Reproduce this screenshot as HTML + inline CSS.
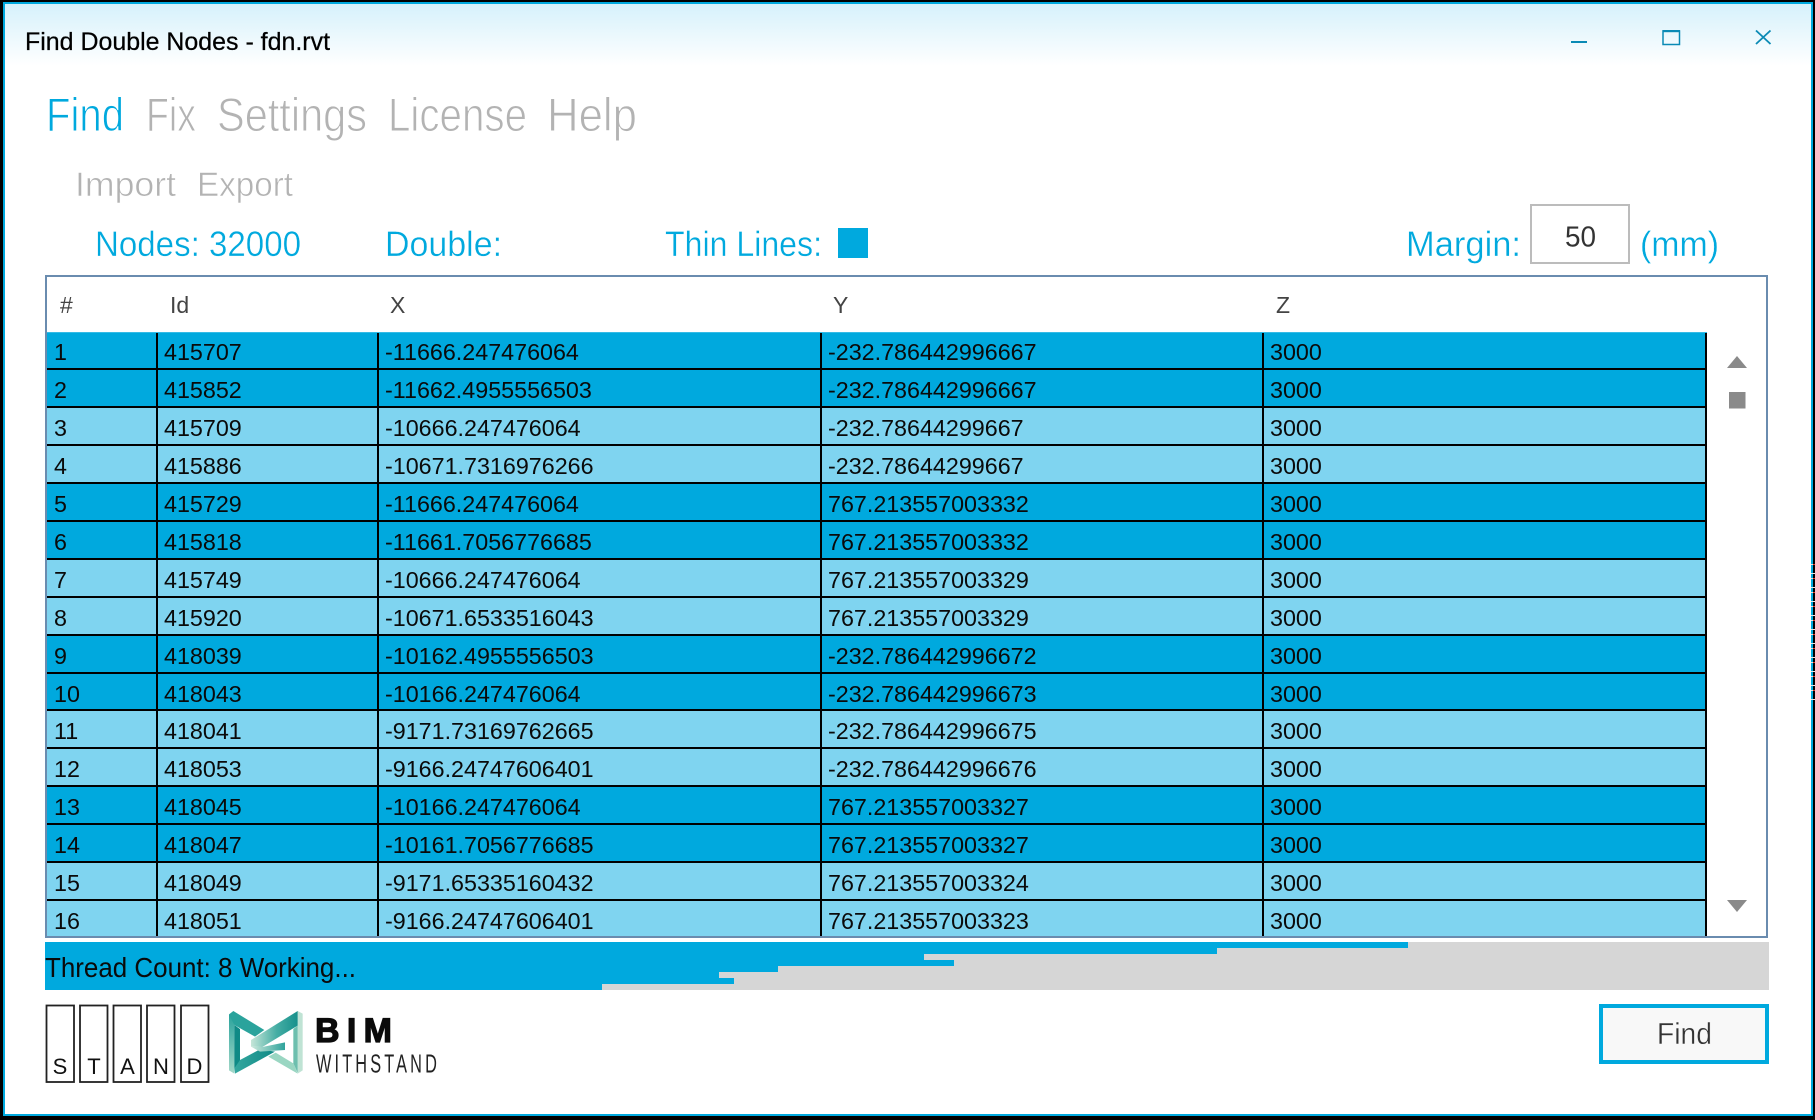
<!DOCTYPE html>
<html lang="en"><head><meta charset="utf-8"><title>Find Double Nodes - fdn.rvt</title>
<style>
html,body{margin:0;padding:0;width:1815px;height:1120px;overflow:hidden;background:#000}
#win{position:absolute;left:3px;top:2px;width:1806px;height:1110px;border:2px solid #00a9de;background:linear-gradient(#d6f1fb 0,#ffffff 62px,#ffffff 100%);}
#grid{position:absolute;left:45px;top:275px;width:1719px;height:659px;border:2px solid #6a8caf;background:#fff;overflow:hidden}
#grid table{position:absolute;left:0;top:55px;width:1660px;table-layout:fixed;border-collapse:separate;border-spacing:0;font:23.3px/26px "Liberation Sans",sans-serif;color:#0a0a0a}
#grid td{height:38px;box-sizing:border-box;padding:6.5px 0 0 6px;vertical-align:top;border-right:2px solid #000;border-bottom:2px solid #000;white-space:nowrap;overflow:hidden}
#grid tr.s td{height:37px}
#grid td:first-child{padding-left:7px}
tr.d td{background:#00a9de}
tr.l td{background:#7fd4f0}
svg{position:absolute;left:0;top:0}
text{font-family:"Liberation Sans",sans-serif}
.t{fill:#b3b3b3;stroke:#fff;stroke-width:.6px}
.b{fill:#00a9de;stroke:#fff;stroke-width:.35px}
.h{fill:#444;font-size:23px}
</style></head><body>
<div id="win"></div>
<div id="grid"><table>
<colgroup><col style="width:111px"><col style="width:221px"><col style="width:443px"><col style="width:442px"><col style="width:443px"></colgroup>
<tr class="d"><td>1</td><td>415707</td><td>-11666.247476064</td><td>-232.786442996667</td><td>3000</td></tr>
<tr class="d"><td>2</td><td>415852</td><td>-11662.4955556503</td><td>-232.786442996667</td><td>3000</td></tr>
<tr class="l"><td>3</td><td>415709</td><td>-10666.247476064</td><td>-232.78644299667</td><td>3000</td></tr>
<tr class="l"><td>4</td><td>415886</td><td>-10671.7316976266</td><td>-232.78644299667</td><td>3000</td></tr>
<tr class="d"><td>5</td><td>415729</td><td>-11666.247476064</td><td>767.213557003332</td><td>3000</td></tr>
<tr class="d"><td>6</td><td>415818</td><td>-11661.7056776685</td><td>767.213557003332</td><td>3000</td></tr>
<tr class="l"><td>7</td><td>415749</td><td>-10666.247476064</td><td>767.213557003329</td><td>3000</td></tr>
<tr class="l"><td>8</td><td>415920</td><td>-10671.6533516043</td><td>767.213557003329</td><td>3000</td></tr>
<tr class="d"><td>9</td><td>418039</td><td>-10162.4955556503</td><td>-232.786442996672</td><td>3000</td></tr>
<tr class="d s"><td>10</td><td>418043</td><td>-10166.247476064</td><td>-232.786442996673</td><td>3000</td></tr>
<tr class="l"><td>11</td><td>418041</td><td>-9171.73169762665</td><td>-232.786442996675</td><td>3000</td></tr>
<tr class="l"><td>12</td><td>418053</td><td>-9166.24747606401</td><td>-232.786442996676</td><td>3000</td></tr>
<tr class="d"><td>13</td><td>418045</td><td>-10166.247476064</td><td>767.213557003327</td><td>3000</td></tr>
<tr class="d"><td>14</td><td>418047</td><td>-10161.7056776685</td><td>767.213557003327</td><td>3000</td></tr>
<tr class="l"><td>15</td><td>418049</td><td>-9171.65335160432</td><td>767.213557003324</td><td>3000</td></tr>
<tr class="l"><td>16</td><td>418051</td><td>-9166.24747606401</td><td>767.213557003323</td><td>3000</td></tr>
</table></div>
<svg width="1815" height="1120" viewBox="0 0 1815 1120" xmlns="http://www.w3.org/2000/svg">
<defs>
<linearGradient id="g2" x1="0" x2="1" y1="0" y2="0"><stop offset="0" stop-color="#c6e6d8"/><stop offset=".55" stop-color="#45ada4"/><stop offset="1" stop-color="#17918c"/></linearGradient>
<linearGradient id="g3" x1="0" x2="0" y1="0" y2="1"><stop offset="0" stop-color="#2aa39c"/><stop offset="1" stop-color="#a5d9c9"/></linearGradient>
<linearGradient id="g4" x1="0" x2="1" y1="0" y2="0"><stop offset="0" stop-color="#35a79f"/><stop offset="1" stop-color="#0f8a86"/></linearGradient>
<linearGradient id="g5" x1="0" x2="1" y1="0" y2="0"><stop offset="0" stop-color="#cde9dc"/><stop offset="1" stop-color="#2fa39b"/></linearGradient>
</defs>
<rect x="47" y="332" width="1660" height="1" fill="#35bbe6"/>
<text x="25" y="50" font-size="25" textLength="305" lengthAdjust="spacingAndGlyphs" fill="#000" stroke="#000" stroke-width=".25">Find Double Nodes - fdn.rvt</text>
<g fill="#0a8ab5">
<rect x="1571" y="41" width="16" height="2"/>
<path d="M1663 31h16.500v13.500h-16.500z" fill="none" stroke="#0a8ab5" stroke-width="1.500"/>
<rect x="1662.500" y="30" width="17.500" height="2.200"/>
</g>
<path d="M1756 30.500L1770.500 44M1770.500 30.500L1756 44" stroke="#0a8ab5" stroke-width="1.800" fill="none"/>
<g font-size="47">
<text x="46" y="131" textLength="78" lengthAdjust="spacingAndGlyphs" fill="#00a9de" stroke="#fff" stroke-width="1">Find</text>
<text class="t" x="146" y="131" textLength="50" lengthAdjust="spacingAndGlyphs" style="stroke-width:1px">Fix</text>
<text class="t" x="217" y="131" textLength="150" lengthAdjust="spacingAndGlyphs" style="stroke-width:1px">Settings</text>
<text class="t" x="388" y="131" textLength="139" lengthAdjust="spacingAndGlyphs" style="stroke-width:1px">License</text>
<text class="t" x="547" y="131" textLength="90" lengthAdjust="spacingAndGlyphs" style="stroke-width:1px">Help</text>
</g>
<g font-size="34">
<text class="t" x="75" y="196" textLength="101" lengthAdjust="spacingAndGlyphs">Import</text>
<text class="t" x="197" y="196" textLength="96" lengthAdjust="spacingAndGlyphs">Export</text>
</g>
<g font-size="35">
<text class="b" x="95" y="256" textLength="206" lengthAdjust="spacingAndGlyphs">Nodes: 32000</text>
<text class="b" x="385" y="256" textLength="117" lengthAdjust="spacingAndGlyphs">Double:</text>
<text class="b" x="665" y="256" textLength="157" lengthAdjust="spacingAndGlyphs">Thin Lines:</text>
<text class="b" x="1406" y="256" textLength="115" lengthAdjust="spacingAndGlyphs">Margin:</text>
<text class="b" x="1640" y="256" textLength="79" lengthAdjust="spacingAndGlyphs">(mm)</text>
</g>
<rect x="838" y="228" width="30" height="30" fill="#00a9de"/>
<rect x="1531" y="205" width="98" height="58" fill="#fff" stroke="#bcbcbc" stroke-width="2"/>
<text x="1565" y="246.500" font-size="29" textLength="31" lengthAdjust="spacingAndGlyphs" fill="#333">50</text>
<text class="h" x="60" y="313">#</text>
<text class="h" x="170" y="313">Id</text>
<text class="h" x="390" y="313">X</text>
<text class="h" x="833" y="313">Y</text>
<text class="h" x="1276" y="313">Z</text>
<g fill="#8a8a8a">
<path d="M1737 356L1747 368H1727Z"/>
<rect x="1729" y="392" width="16.500" height="16.500"/>
<path d="M1727 900H1747L1737 912Z"/>
</g>
<rect x="45" y="942" width="1724" height="48" fill="#d6d6d6"/>
<g fill="#00a9de">
<rect x="45" y="942" width="1363" height="6"/>
<rect x="45" y="948" width="1172" height="6"/>
<rect x="45" y="954" width="879" height="6"/>
<rect x="45" y="960" width="909" height="6"/>
<rect x="45" y="966" width="733" height="6"/>
<rect x="45" y="972" width="674" height="6"/>
<rect x="45" y="978" width="689" height="6"/>
<rect x="45" y="984" width="557" height="6"/>
</g>
<text x="45" y="977" font-size="28" textLength="311" lengthAdjust="spacingAndGlyphs" fill="#0a0a0a">Thread Count: 8 Working...</text>
<g fill="#fff" stroke="#222" stroke-width="1.800">
<rect x="46.500" y="1005.500" width="27.500" height="76.500"/>
<rect x="80" y="1005.500" width="27.500" height="76.500"/>
<rect x="113.500" y="1005.500" width="27.500" height="76.500"/>
<rect x="147" y="1005.500" width="27.500" height="76.500"/>
<rect x="181" y="1005.500" width="27.500" height="76.500"/>
</g>
<g font-size="22" fill="#111" text-anchor="middle">
<text x="60" y="1074">S</text><text x="94" y="1074">T</text><text x="127.500" y="1074">A</text><text x="161" y="1074">N</text><text x="194.500" y="1074">D</text>
</g>
<g transform="translate(225 1005) scale(.3333)">
<path d="M12 28L28 38V206L12 196Z" fill="url(#g3)"/>
<path d="M12 28L25 18L118 75L90 95L28 60Z" fill="#2aa39c"/>
<path d="M28 60L45 72V172L28 190Z" fill="#0f8a86"/>
<path d="M130 155L152 143L205 175L218 206Z" fill="#9ad6c2"/>
<path d="M218 18L233 26V196L218 206Z" fill="#bfe3d4"/>
<path d="M205 72L218 62V204L205 175Z" fill="#6dbfae"/>
<path d="M28 190L45 165L105 133L150 140L30 206Z" fill="url(#g4)"/>
<path d="M78 125L105 140L180 135V112L112 126Z" fill="url(#g5)"/>
<path d="M78 105L218 18V62L112 126L78 125Z" fill="url(#g2)"/>
</g>
<text x="315" y="1042" font-size="34" font-weight="bold" textLength="77" lengthAdjust="spacing" fill="#0b0b0b" stroke="#0b0b0b" stroke-width="1.200">BIM</text>
<text x="316" y="1072.300" font-size="26" textLength="124" lengthAdjust="spacingAndGlyphs" style="letter-spacing:5px" fill="#222">WITHSTAND</text>
<rect x="1601" y="1006" width="166" height="56" fill="#f8f8f8" stroke="#00a9de" stroke-width="4"/>
<text x="1657" y="1044" font-size="31" textLength="55" lengthAdjust="spacingAndGlyphs" fill="#333" stroke="#f8f8f8" stroke-width=".4">Find</text>
<g fill="#e6e6e6">
<rect x="1811" y="564" width="4" height="1"/><rect x="1811" y="573" width="4" height="1"/><rect x="1811" y="578" width="4" height="1"/><rect x="1811" y="587" width="4" height="1"/><rect x="1811" y="592" width="4" height="1"/><rect x="1811" y="601" width="4" height="1"/><rect x="1811" y="606" width="4" height="1"/><rect x="1811" y="615" width="4" height="1"/><rect x="1811" y="620" width="4" height="1"/><rect x="1811" y="629" width="4" height="1"/><rect x="1811" y="634" width="4" height="1"/><rect x="1811" y="643" width="4" height="1"/><rect x="1811" y="648" width="4" height="1"/><rect x="1811" y="657" width="4" height="1"/><rect x="1811" y="662" width="4" height="1"/><rect x="1811" y="671" width="4" height="1"/><rect x="1811" y="676" width="4" height="1"/><rect x="1811" y="685" width="4" height="1"/><rect x="1811" y="690" width="4" height="1"/><rect x="1811" y="699" width="4" height="1"/>
</g>
<g fill="#d83a2a">
<rect x="1813" y="564" width="2" height="1"/><rect x="1813" y="578" width="2" height="1"/><rect x="1813" y="592" width="2" height="1"/><rect x="1813" y="606" width="2" height="1"/><rect x="1813" y="620" width="2" height="1"/><rect x="1813" y="634" width="2" height="1"/><rect x="1813" y="648" width="2" height="1"/><rect x="1813" y="662" width="2" height="1"/><rect x="1813" y="676" width="2" height="1"/><rect x="1813" y="690" width="2" height="1"/>
</g>
</svg>
</body></html>
